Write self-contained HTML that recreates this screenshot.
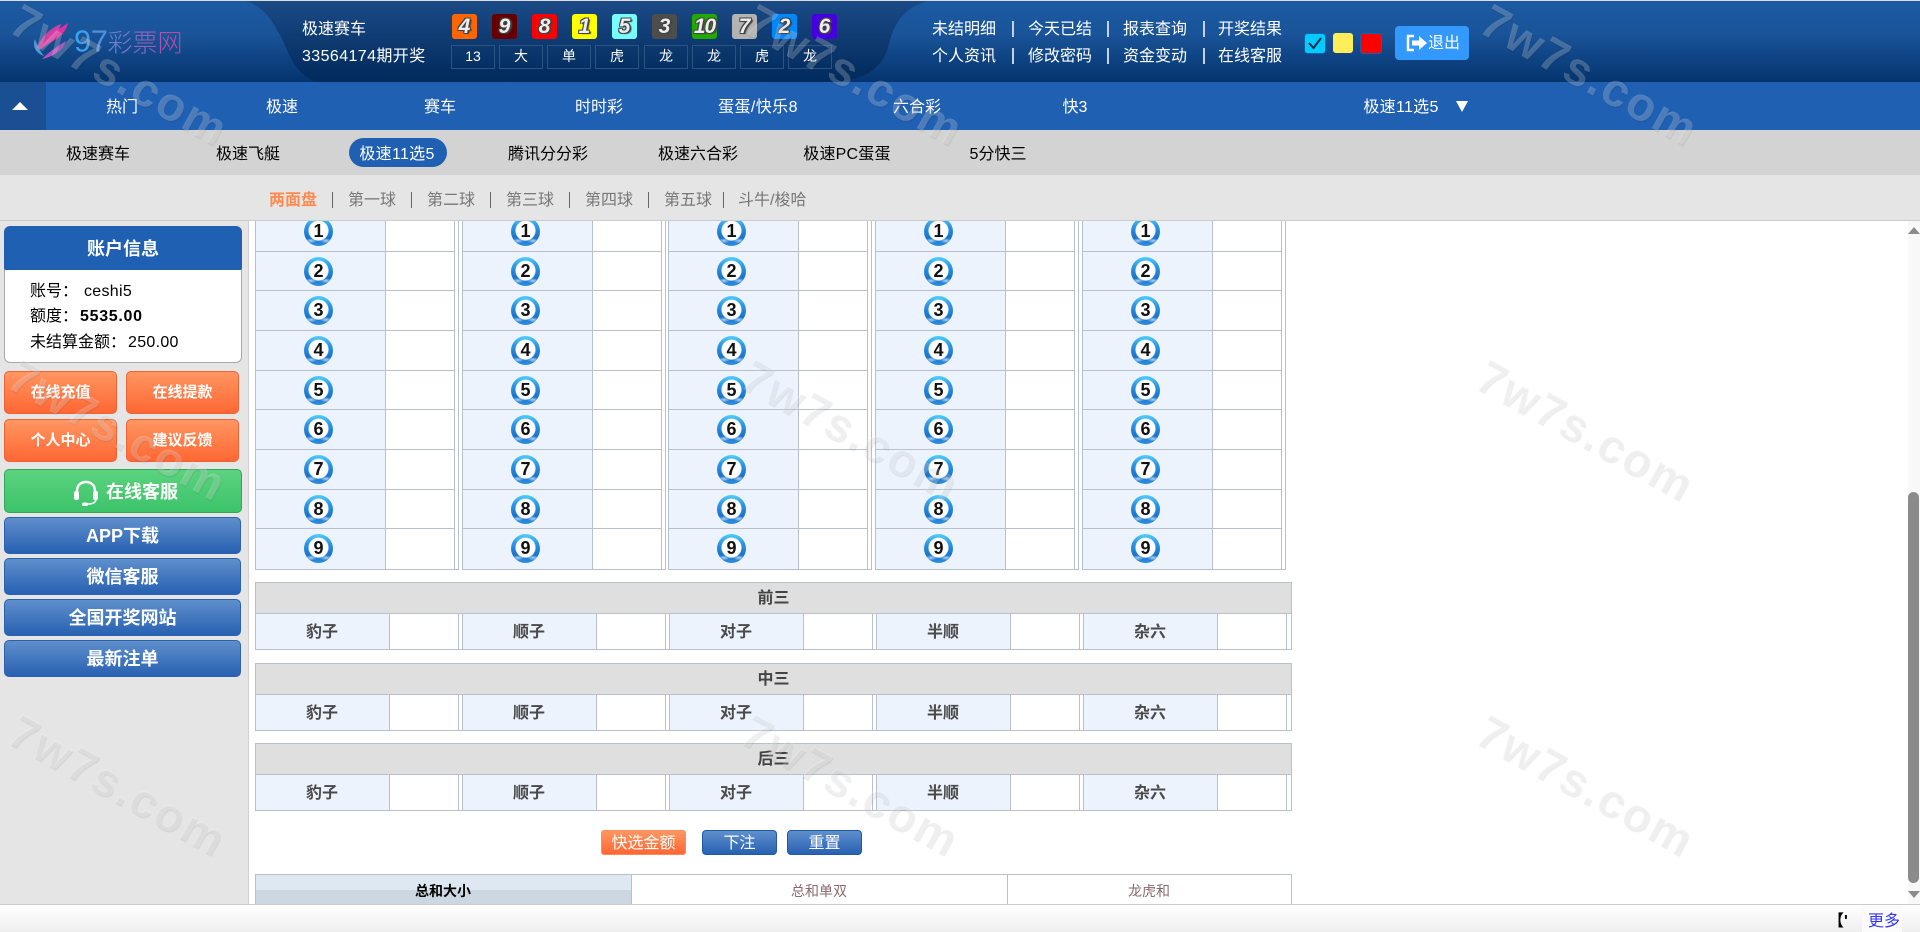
<!DOCTYPE html>
<html lang="zh">
<head>
<meta charset="utf-8">
<title>97彩票网</title>
<style>
html,body{margin:0;padding:0;width:1920px;height:932px;overflow:hidden;background:#fff}
body{position:relative;font-family:"Liberation Sans","Noto Sans CJK SC",sans-serif;font-size:16px;color:#000}
.a{position:absolute}
.t{position:absolute;white-space:nowrap;transform:translate(-50%,calc(-50% + 1px));line-height:1}
.l{position:absolute;white-space:nowrap;line-height:1;transform:translateY(calc(-50% + 1px))}
.w{color:#fff}
#hd{left:0;top:1px;width:1920px;height:81px;background:linear-gradient(#1b5aa2 0,#1a5499 40%,#04346e 100%)}
.n{position:absolute;top:14px;width:25px;height:25px;border-radius:3px;text-align:center;font:italic bold 21px/25px "Liberation Sans",sans-serif;color:#eee;text-shadow:-1px -1px 0 #444,1px -1px 0 #444,-1px 1px 0 #444,1px 1px 0 #444,2px 1px 1px #444}
.q{position:absolute;top:45px;height:22px;width:42px;border:1px solid #2a5482;text-align:center;color:#fff;font-size:14px;line-height:20px}
.o{position:absolute;height:41px;width:111px;border:1px solid #ee6233;border-radius:5px;background:linear-gradient(#ff9662,#ff6733);color:#fff;font-weight:bold;font-size:15px;text-align:center;line-height:41px}
.u{position:absolute;left:4px;width:235px;height:35px;border:1px solid #2a62b0;border-radius:5px;background:linear-gradient(#5f8fcc,#2861b2);color:#fff;font-weight:bold;font-size:18px;text-align:center;line-height:36px}
.k{position:absolute;top:212px;width:204px;height:357px;border-bottom:1px solid #b8c0cc;box-sizing:content-box;background:linear-gradient(to right,#b8c0cc 0 1px,#ecf3fd 1px 130px,#b8c0cc 130px 131px,#fff 131px 199px,#b8c0cc 199px 200px,#fff 200px 203px,#b8c0cc 203px 204px)}
.r{width:200px;height:39.66px;box-sizing:border-box;border-bottom:1px solid #b8c0cc;position:relative}
.k .r:last-child{border-bottom:0}
.r b{position:absolute;left:49px;top:5px;width:29px;height:29px;border-radius:50%;text-align:center;font:bold 18px/28px "Liberation Sans",sans-serif;color:#111;background:radial-gradient(circle at 50% 47%,#fff 0 9.5px,rgba(255,255,255,0) 10.5px),radial-gradient(ellipse 6px 2.500px at 24% 82%,rgba(255,255,255,.65),rgba(255,255,255,0)),radial-gradient(ellipse 6px 2.500px at 76% 82%,rgba(255,255,255,.65),rgba(255,255,255,0)),linear-gradient(#52d0fa 0,#2f98e4 30%,#1a74cc 70%,#2f8fe0 100%)}
.h{position:absolute;left:255px;width:1035px;height:30px;border:1px solid #b8c0cc;background:#dfdfdf;text-align:center;font-weight:bold;font-size:16px;line-height:32px;color:#444}
.w2{position:absolute;left:255px;width:1035px;height:35px;border:1px solid #b8c0cc;border-top:0;background:repeating-linear-gradient(to right,#ecf3fd 0 133px,#b8c0cc 133px 134px,#fff 134px 202px,#b8c0cc 202px 203px,#fff 203px 206px,#b8c0cc 206px 207px)}
.w2 i{position:absolute;left:1034px;top:0;width:1px;height:35px;background:#fff}
.c{position:absolute;white-space:nowrap;top:19px;font-weight:bold;color:#4a4a4a;transform:translate(-50%,-50%);line-height:1}
.wm{position:absolute;z-index:50;white-space:nowrap;font:bold 47px/1 "Liberation Sans",sans-serif;letter-spacing:2px;color:rgba(255,255,255,.22);text-shadow:1px 1px 1px rgba(0,0,0,.08);transform:translate(-50%,-50%) rotate(29deg);pointer-events:none}
.s{position:absolute;width:1px;height:16px;top:192px;background:#666}
.hs{position:absolute;width:2px;height:16px;background:#c3d1e2}
.gr{color:#777}
</style>
</head>
<body>
<div class="a" style="left:0;top:0;width:1920px;height:1px;background:#ddd"></div>
<div id="hd" class="a"></div>
<svg class="a" style="left:0;top:1px" width="1920" height="81">
<defs><linearGradient id="dk" x1="0" y1="0" x2="0" y2="1"><stop offset="0" stop-color="#1b4a86"/><stop offset="1" stop-color="#012a5c"/></linearGradient></defs>
<path d="M245 0C262 4 272 18 282 38C292 60 296 72 316 81L838 81C864 78 880 68 887 50C892 30 898 8 928 0Z" fill="url(#dk)"/>
<path d="M68 22C66 32 55 42 42 44C50 36 58 28 68 22Z" fill="#e0309f"/>
<path d="M61 23C58 34 48 46 36 50C38 40 48 28 61 23Z" fill="#e23ea8" opacity=".9"/>
<path d="M66 40C62 50 52 56 42 58C48 52 56 46 66 40Z" fill="#c953c4" opacity=".9"/>
<path d="M35 38C32 46 36 52 44 55C40 50 37 44 35 38Z" fill="#5aa6e6" opacity=".85"/>
</svg>
<div class="l" style="left:74px;top:40px;font-size:25px;font-weight:300;background:linear-gradient(to right,#30a8f2,#c8409e);-webkit-background-clip:text;background-clip:text;color:transparent"><span style="font-size:31px;letter-spacing:-.5px">97</span>彩票网</div>

<div class="l w" style="left:302px;top:29px">极速赛车</div>
<div class="l w" style="left:302px;top:56px;letter-spacing:.4px">33564174期开奖</div>

<div class="n" style="left:452px;background:#ff6600">4</div>
<div class="n" style="left:492px;background:#660000">9</div>
<div class="n" style="left:532px;background:#ff0000">8</div>
<div class="n" style="left:572px;background:#ffff00">1</div>
<div class="n" style="left:612px;background:#77ffff">5</div>
<div class="n" style="left:652px;background:#4d4d4d">3</div>
<div class="n" style="left:692px;background:#22aa00;letter-spacing:-1px">10</div>
<div class="n" style="left:732px;background:#b3b3b3">7</div>
<div class="n" style="left:772px;background:#0088ff">2</div>
<div class="n" style="left:812px;background:#4400dd">6</div>

<div class="q" style="left:451px">13</div>
<div class="q" style="left:499px">大</div>
<div class="q" style="left:547px">单</div>
<div class="q" style="left:595px">虎</div>
<div class="q" style="left:644px">龙</div>
<div class="q" style="left:692px">龙</div>
<div class="q" style="left:740px">虎</div>
<div class="q" style="left:788px">龙</div>

<div class="l w" style="left:932px;top:29px">未结明细</div>
<div class="l w" style="left:1028px;top:29px">今天已结</div>
<div class="l w" style="left:1123px;top:29px">报表查询</div>
<div class="l w" style="left:1218px;top:29px">开奖结果</div>
<div class="l w" style="left:932px;top:56px">个人资讯</div>
<div class="l w" style="left:1028px;top:56px">修改密码</div>
<div class="l w" style="left:1123px;top:56px">资金变动</div>
<div class="l w" style="left:1218px;top:56px">在线客服</div>
<div class="hs" style="left:1012px;top:21px"></div>
<div class="hs" style="left:1107px;top:21px"></div>
<div class="hs" style="left:1203px;top:21px"></div>
<div class="hs" style="left:1012px;top:48px"></div>
<div class="hs" style="left:1107px;top:48px"></div>
<div class="hs" style="left:1203px;top:48px"></div>

<svg class="a" style="left:1304px;top:33px" width="22" height="21"><rect x=".5" y=".5" width="21" height="20" rx="3" fill="#00ccff" stroke="#1a5fa8"/><path d="M5 10l4.500 5L17 5" fill="none" stroke="#0a2a50" stroke-width="2"/></svg>
<div class="a" style="left:1333px;top:33px;width:20px;height:20px;border-radius:3px;background:#ffee58"></div>
<div class="a" style="left:1360px;top:33px;width:20px;height:19px;border-radius:3px;background:#ff0000;border:1px solid #1a5fa8"></div>
<div class="a" style="left:1395px;top:26px;width:74px;height:34px;border-radius:4px;background:#3399ff"></div>
<svg class="a" style="left:1406px;top:34px" width="22" height="18"><path d="M8 2H2V16H8" fill="none" stroke="#fff" stroke-width="2.500"/><path d="M6 6.500H13V2L21 9L13 16V11.500H6Z" fill="#fff"/></svg>
<div class="l w" style="left:1428px;top:43px">退出</div>

<div class="a" style="left:0;top:82px;width:1920px;height:48px;background:#2060b3"></div>
<div class="a" style="left:0;top:82px;width:46px;height:48px;background:#1a4f94"></div>
<div class="a" style="left:12px;top:102px;width:0;height:0;border-left:8.500px solid transparent;border-right:8.500px solid transparent;border-bottom:8px solid #fff"></div>
<div class="t w" style="left:122px;top:107px">热门</div>
<div class="t w" style="left:282px;top:107px">极速</div>
<div class="t w" style="left:440px;top:107px">赛车</div>
<div class="t w" style="left:599px;top:107px">时时彩</div>
<div class="t w" style="left:758px;top:107px;letter-spacing:.4px">蛋蛋/快乐8</div>
<div class="t w" style="left:917px;top:107px">六合彩</div>
<div class="t w" style="left:1075px;top:107px">快3</div>
<div class="t w" style="left:1401px;top:107px;letter-spacing:.3px">极速11选5</div>
<div class="a" style="left:1456px;top:101px;width:0;height:0;border-left:6px solid transparent;border-right:6px solid transparent;border-top:11px solid #fff"></div>

<div class="a" style="left:0;top:130px;width:1920px;height:45px;background:#d3d3d3"></div>
<div class="a" style="left:349px;top:138px;width:98px;height:29px;border-radius:15px;background:#2060b3"></div>
<div class="t" style="left:98px;top:154px">极速赛车</div>
<div class="t" style="left:248px;top:154px">极速飞艇</div>
<div class="t w" style="left:397px;top:154px;letter-spacing:.3px">极速11选5</div>
<div class="t" style="left:548px;top:154px">腾讯分分彩</div>
<div class="t" style="left:698px;top:154px">极速六合彩</div>
<div class="t" style="left:847px;top:154px;letter-spacing:.2px">极速PC蛋蛋</div>
<div class="t" style="left:998px;top:154px">5分快三</div>

<div class="a" style="left:0;top:175px;width:1920px;height:45px;background:#e5e5e5"></div>
<div class="a" style="left:0;top:220px;width:1920px;height:1px;background:#ccc"></div>
<div class="l" style="left:269px;top:200px;color:#ff8a50;font-weight:bold">两面盘</div>
<div class="s" style="left:332px"></div>
<div class="l gr" style="left:348px;top:200px">第一球</div>
<div class="s" style="left:411px"></div>
<div class="l gr" style="left:427px;top:200px">第二球</div>
<div class="s" style="left:490px"></div>
<div class="l gr" style="left:506px;top:200px">第三球</div>
<div class="s" style="left:569px"></div>
<div class="l gr" style="left:585px;top:200px">第四球</div>
<div class="s" style="left:648px"></div>
<div class="l gr" style="left:664px;top:200px">第五球</div>
<div class="s" style="left:723px"></div>
<div class="l gr" style="left:738px;top:200px">斗牛/梭哈</div>

<!-- content -->
<div class="a" style="left:0;top:221px;width:1920px;height:683px;overflow:hidden;background:#fff">
<div class="a" style="left:0;top:-221px;width:1920px;height:904px">
<div class="k" style="left:255px"><div class="r"><b>1</b></div><div class="r"><b>2</b></div><div class="r"><b>3</b></div><div class="r"><b>4</b></div><div class="r"><b>5</b></div><div class="r"><b>6</b></div><div class="r"><b>7</b></div><div class="r"><b>8</b></div><div class="r"><b>9</b></div></div>
<div class="k" style="left:462px"><div class="r"><b>1</b></div><div class="r"><b>2</b></div><div class="r"><b>3</b></div><div class="r"><b>4</b></div><div class="r"><b>5</b></div><div class="r"><b>6</b></div><div class="r"><b>7</b></div><div class="r"><b>8</b></div><div class="r"><b>9</b></div></div>
<div class="k" style="left:668px"><div class="r"><b>1</b></div><div class="r"><b>2</b></div><div class="r"><b>3</b></div><div class="r"><b>4</b></div><div class="r"><b>5</b></div><div class="r"><b>6</b></div><div class="r"><b>7</b></div><div class="r"><b>8</b></div><div class="r"><b>9</b></div></div>
<div class="k" style="left:875px"><div class="r"><b>1</b></div><div class="r"><b>2</b></div><div class="r"><b>3</b></div><div class="r"><b>4</b></div><div class="r"><b>5</b></div><div class="r"><b>6</b></div><div class="r"><b>7</b></div><div class="r"><b>8</b></div><div class="r"><b>9</b></div></div>
<div class="k" style="left:1082px"><div class="r"><b>1</b></div><div class="r"><b>2</b></div><div class="r"><b>3</b></div><div class="r"><b>4</b></div><div class="r"><b>5</b></div><div class="r"><b>6</b></div><div class="r"><b>7</b></div><div class="r"><b>8</b></div><div class="r"><b>9</b></div></div>

<div class="h" style="top:582px">前三</div>
<div class="w2" style="top:614px"><i></i><span class="c" style="left:66px">豹子</span><span class="c" style="left:273px">顺子</span><span class="c" style="left:480px">对子</span><span class="c" style="left:687px">半顺</span><span class="c" style="left:894px">杂六</span></div>
<div class="h" style="top:663px">中三</div>
<div class="w2" style="top:695px"><i></i><span class="c" style="left:66px">豹子</span><span class="c" style="left:273px">顺子</span><span class="c" style="left:480px">对子</span><span class="c" style="left:687px">半顺</span><span class="c" style="left:894px">杂六</span></div>
<div class="h" style="top:743px">后三</div>
<div class="w2" style="top:775px"><i></i><span class="c" style="left:66px">豹子</span><span class="c" style="left:273px">顺子</span><span class="c" style="left:480px">对子</span><span class="c" style="left:687px">半顺</span><span class="c" style="left:894px">杂六</span></div>

<div class="a w" style="left:601px;top:830px;width:83px;height:23px;border:1px solid #ff8a5a;border-radius:3px;background:linear-gradient(#ff9662,#ff6733);text-align:center;font-size:16px;line-height:25px">快选金额</div>
<div class="a w" style="left:702px;top:830px;width:73px;height:23px;border:1px solid #1f5aa8;border-radius:4px;background:linear-gradient(#5f8fcc,#2861b2);text-align:center;line-height:25px">下注</div>
<div class="a w" style="left:787px;top:830px;width:73px;height:23px;border:1px solid #1f5aa8;border-radius:4px;background:linear-gradient(#5f8fcc,#2861b2);text-align:center;line-height:25px">重置</div>

<div class="a" style="left:255px;top:874px;width:1035px;height:29px;border:1px solid #b8c0cc;border-bottom:0;background:#fff"></div>
<div class="a" style="left:256px;top:875px;width:375px;height:15px;background:#dde8f2"></div>
<div class="a" style="left:256px;top:890px;width:375px;height:14px;background:#ccd7e1"></div>
<div class="a" style="left:631px;top:875px;width:1px;height:29px;background:#b8c0cc"></div>
<div class="a" style="left:1007px;top:875px;width:1px;height:29px;background:#b8c0cc"></div>
<div class="t" style="left:443px;top:890px;font-size:14px;font-weight:bold">总和大小</div>
<div class="t" style="left:819px;top:890px;font-size:14px;color:#8a6a6a">总和单双</div>
<div class="t" style="left:1149px;top:890px;font-size:14px;color:#8a6a6a">龙虎和</div>
</div>
</div>

<!-- sidebar -->
<div class="a" style="left:0;top:221px;width:248px;height:683px;background:#e5e5e5;border-right:1px solid #d2d2d2"></div>
<div class="a" style="left:4px;top:268px;width:236px;height:93px;background:#fff;border:1px solid #a8a8a8;border-radius:0 0 6px 6px"></div>
<div class="a" style="left:4px;top:226px;width:238px;height:44px;background:#2060b3;border-radius:6px 6px 2px 2px"></div>
<div class="t w" style="left:123px;top:248px;font-size:18px;font-weight:bold">账户信息</div>
<div class="l" style="left:30px;top:291px">账号：</div><div class="l" style="left:84px;top:291px;letter-spacing:.3px">ceshi5</div>
<div class="l" style="left:30px;top:316px">额度：</div><div class="l" style="left:80px;top:316px;font-weight:bold;letter-spacing:.7px">5535.00</div>
<div class="l" style="left:30px;top:342px">未结算金额：</div><div class="l" style="left:128px;top:342px;letter-spacing:.3px">250.00</div>

<div class="o" style="left:4px;top:371px">在线充值</div>
<div class="o" style="left:126px;top:371px">在线提款</div>
<div class="o" style="left:4px;top:419px">个人中心</div>
<div class="o" style="left:126px;top:419px">建议反馈</div>

<div class="a" style="left:4px;top:469px;width:236px;height:42px;border:1px solid #2fa85a;border-radius:5px;background:linear-gradient(#5cd27e,#3cc46a)"></div>
<svg class="a" style="left:72px;top:480px" width="28" height="27"><path d="M5 15V11C5 5 9 2 14 2C19 2 23 5 23 11V15" fill="none" stroke="#fff" stroke-width="2.500"/><rect x="2" y="11" width="5" height="9" rx="2" fill="#fff"/><rect x="21" y="11" width="5" height="9" rx="2" fill="#fff"/><path d="M24 20C23 23 20 24 16 24" fill="none" stroke="#fff" stroke-width="1.500"/><rect x="10" y="22.500" width="6" height="3.500" rx="1.700" fill="#fff"/></svg>
<div class="l w" style="left:106px;top:491px;font-size:18px;font-weight:bold">在线客服</div>

<div class="u" style="top:517px">APP下载</div>
<div class="u" style="top:558px">微信客服</div>
<div class="u" style="top:599px">全国开奖网站</div>
<div class="u" style="top:640px">最新注单</div>

<!-- scrollbar -->
<div class="a" style="left:1908px;top:221px;width:12px;height:683px;background:#f8f8f8"></div>
<div class="a" style="left:1908px;top:492px;width:11px;height:391px;border-radius:6px;background:#8b8b8b"></div>
<div class="a" style="left:1908px;top:227px;width:0;height:0;border-left:6px solid transparent;border-right:6px solid transparent;border-bottom:7px solid #8b8b8b"></div>
<div class="a" style="left:1908px;top:891px;width:0;height:0;border-left:6px solid transparent;border-right:6px solid transparent;border-top:7px solid #8b8b8b"></div>

<!-- bottom bar -->
<div class="a" style="left:0;top:904px;width:1920px;height:27px;border-top:1px solid #ccc;background:linear-gradient(#fff,#efefef)"></div>
<div class="a" style="left:1828px;top:905px;width:24px;height:27px;overflow:hidden"><span class="l" style="left:0;top:16px;font-weight:bold">【'</span></div>
<div class="a" style="left:1862px;top:905px;width:40px;height:27px;background:#fbfbfb"></div>
<div class="l" style="left:1868px;top:921px;color:#3333ff">更多</div>

<!-- watermarks -->
<div class="wm" style="left:120px;top:75px">7w7s.com</div>
<div class="wm" style="left:855px;top:75px">7w7s.com</div>
<div class="wm" style="left:1590px;top:75px">7w7s.com</div>
<div class="wm" style="left:118px;top:430px">7w7s.com</div>
<div class="wm" style="left:851px;top:430px">7w7s.com</div>
<div class="wm" style="left:1586px;top:430px">7w7s.com</div>
<div class="wm" style="left:118px;top:785px">7w7s.com</div>
<div class="wm" style="left:851px;top:785px">7w7s.com</div>
<div class="wm" style="left:1586px;top:785px">7w7s.com</div>
</body>
</html>
